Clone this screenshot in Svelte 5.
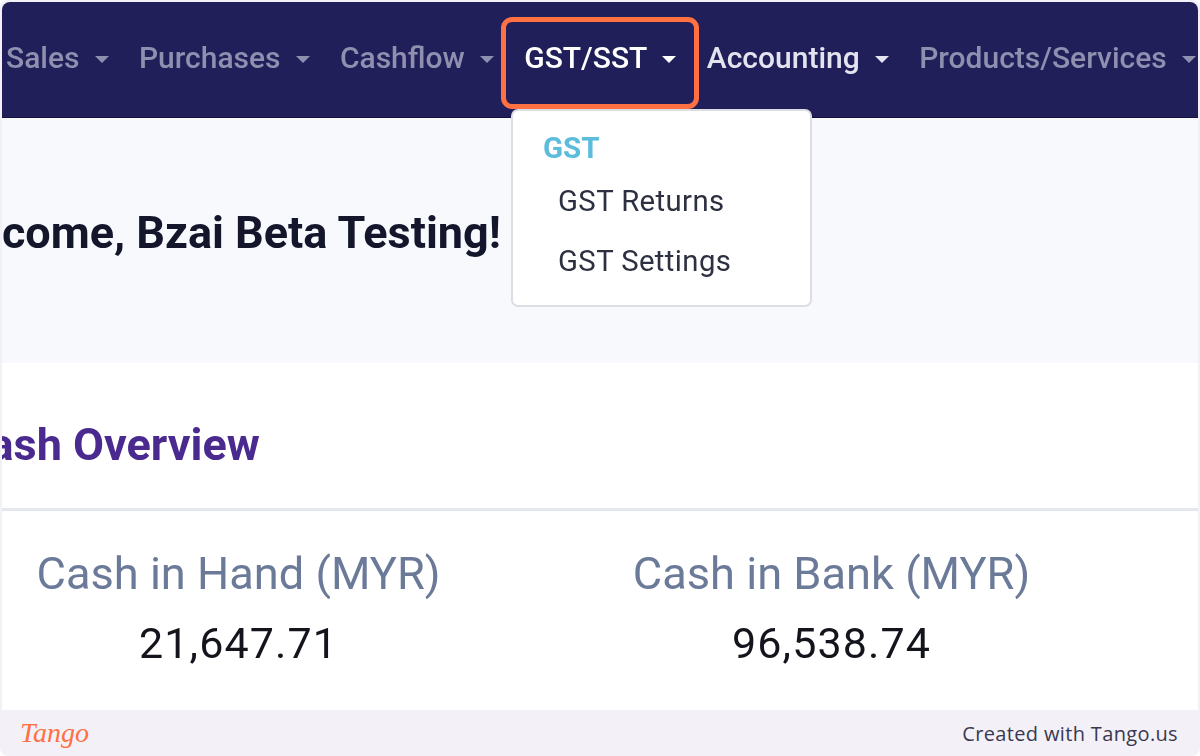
<script>
  const navItems = [
    { label: 'Sales', state: 'dim' },
    { label: 'Purchases', state: 'dim' },
    { label: 'Cashflow', state: 'dim' },
    { label: 'GST/SST', state: 'active' },
    { label: 'Accounting', state: 'bright' },
    { label: 'Products/Services', state: 'dim' }
  ];
  const stats = [
    { label: 'Cash in Hand (MYR)', value: '21,647.71' },
    { label: 'Cash in Bank (MYR)', value: '96,538.74' }
  ];
</script>

<div class="shell">
  <div class="window">
    <nav class="nav">
      {#each navItems as item}
        <span class="nav-item {item.state}">
          {item.label}
          <i class="caret"></i>
        </span>
      {/each}
    </nav>
    <div class="welcome">
      <h1>Welcome, Bzai Beta Testing!</h1>
    </div>
    <section class="card">
      <h2>Cash Overview</h2>
      <div class="stats">
        {#each stats as s}
          <div class="stat">
            <div class="stat-label">{s.label}</div>
            <div class="stat-value">{s.value}</div>
          </div>
        {/each}
      </div>
    </section>
    <div class="menu">
      <div class="menu-head">GST</div>
      <div class="menu-item">GST Returns</div>
      <div class="menu-item">GST Settings</div>
    </div>
    <div class="highlight"></div>
  </div>
  <footer class="footer">
    <span class="logo">Tango</span>
    <span class="credit">Created with Tango.us</span>
  </footer>
</div>

<style>
  :global(body) {
    margin: 0;
    background: #fff;
    font-family: Roboto, "Liberation Sans", sans-serif;
  }
  .shell {
    height: 756px;
    display: flex;
    flex-direction: column;
    background: #f3f1f7;
    border-radius: 8px;
    overflow: hidden;
    box-sizing: border-box;
    padding-top: 2px;
  }
  .window {
    position: relative;
    height: 708px;
    margin: 0 2px;
    background: #f8f9fd;
    border-radius: 8px 8px 0 0;
    overflow: hidden;
    flex: none;
  }
  .nav {
    height: 116px;
    box-sizing: border-box;
    background: #211f59;
    border-bottom: 1px solid #14123f;
    display: flex;
    align-items: center;
    padding: 0 0 4px 4px;
    gap: 30.4px;
    white-space: nowrap;
  }
  .nav-item {
    display: flex;
    align-items: center;
    gap: 15px;
    font-size: 30px;
    font-weight: 500;
    color: #8f8fb0;
    filter: blur(0.6px);
  }
  .nav-item.active { color: #fff; }
  .nav-item.bright { color: #e3e4ef; }
  .caret {
    width: 0;
    height: 0;
    margin-top: 3px;
    border-left: 7px solid transparent;
    border-right: 7px solid transparent;
    border-top: 7px solid currentColor;
  }
  .welcome {
    height: 245px;
    box-sizing: border-box;
    padding-top: 88px;
    margin-left: -75px;
  }
  h1 {
    margin: 0;
    font-size: 45px;
    line-height: 54px;
    font-weight: 700;
    color: #14172b;
    white-space: nowrap;
    filter: blur(0.6px);
  }
  .card {
    background: #fff;
    height: 347px;
  }
  h2 {
    margin: 0 0 0 -42px;
    height: 148px;
    box-sizing: border-box;
    padding: 55px 0 0 0;
    font-size: 45px;
    line-height: 54px;
    font-weight: 700;
    color: #4a2a8e;
    white-space: nowrap;
    filter: blur(0.6px);
    border-bottom: 3px solid #e4e7ee;
  }
  .stats {
    display: grid;
    grid-template-columns: 593px 593px;
    margin-left: -60px;
    padding-top: 33px;
    text-align: center;
    white-space: nowrap;
  }
  .stat-label {
    font-size: 45.2px;
    line-height: 60px;
    color: #6b7a99;
    filter: blur(0.5px);
  }
  .stat-value {
    font-size: 43px;
    line-height: 60px;
    margin-top: 9px;
    color: #14151c;
    letter-spacing: 1.1px;
    filter: blur(0.5px);
  }
  .menu {
    position: absolute;
    left: 509px;
    top: 107px;
    width: 301px;
    height: 198px;
    box-sizing: border-box;
    background: #fff;
    border: 2px solid #dcdee4;
    border-radius: 7px;
    padding: 19px 0 0 30px;
  }
  .menu-head {
    font-size: 29.5px;
    line-height: 36px;
    font-weight: 700;
    color: #5bbcdc;
    margin-bottom: 5px;
    filter: blur(0.6px);
  }
  .menu-item {
    font-size: 29.3px;
    line-height: 60px;
    padding-left: 15px;
    color: #2c3040;
    letter-spacing: 0.4px;
    filter: blur(0.5px);
  }
  .highlight {
    position: absolute;
    left: 499px;
    top: 15px;
    width: 198px;
    height: 92px;
    box-sizing: border-box;
    border: 5px solid #ff7043;
    border-radius: 11px;
  }
  .footer {
    flex: 1;
    display: flex;
    align-items: center;
    justify-content: space-between;
    padding: 0 22px 0 20px;
  }
  .logo {
    font-family: "Liberation Serif", serif;
    font-style: italic;
    font-size: 28px;
    color: #ff7043;
  }
  .credit {
    font-family: "Open Sans", sans-serif;
    font-size: 20px;
    color: #3a3850;
    letter-spacing: 0.35px;
  }
</style>
